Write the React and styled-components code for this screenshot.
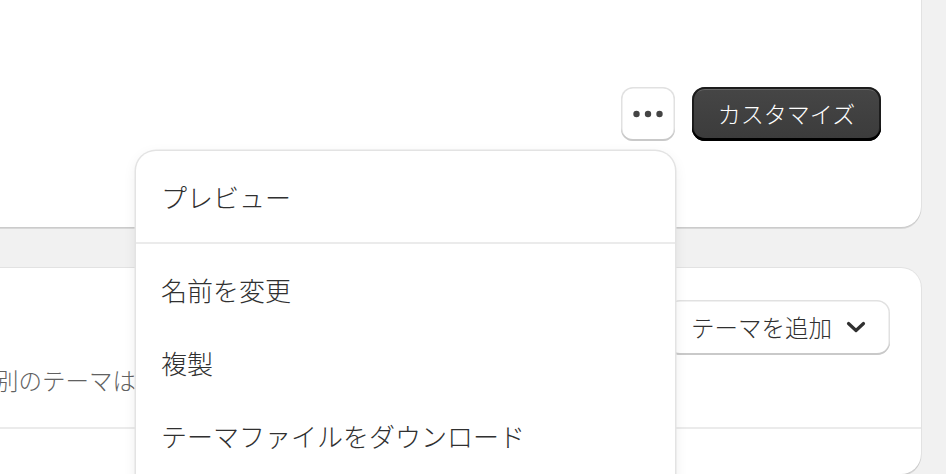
import React from "react";
import styled, { createGlobalStyle } from "styled-components";

const Global = createGlobalStyle`
  html, body { margin: 0; padding: 0; overflow: hidden; background: #f1f1f1; }
  body { font-family: "Noto Sans CJK JP", "Noto Sans", sans-serif; color: #303030; font-weight: 300; }
`;

const Page = styled.div`
  display: flex;
  flex-direction: column;
  gap: 41px;
  width: 961px;
  margin-left: -40px;
  height: 474px;
`;

const Card = styled.section`
  background: #fff;
  border-radius: 20px;
  box-shadow: 0 2px 0 rgba(0, 0, 0, 0.1), 0 0 0 1px rgba(0, 0, 0, 0.06);
  padding: ${(p) => p.$pad};
  margin-top: ${(p) => p.$mt || "0"};
  flex: ${(p) => (p.$grow ? "1" : "none")};
`;

const Actions = styled.div`
  display: flex;
  justify-content: flex-end;
  align-items: center;
  gap: 17px;
`;

const MenuAnchor = styled.div`
  position: relative;
  display: flex;
`;

const IconButton = styled.button`
  width: 54px;
  height: 54px;
  border: none;
  border-radius: 12px;
  background: #fff;
  box-shadow: inset 0 -2px 0 #c9c9c9, inset 0 0 0 1.5px #e1e1e1;
  display: flex;
  align-items: center;
  justify-content: center;
  padding: 0;
`;

const PrimaryButton = styled.button`
  height: 54px;
  width: 189px;
  padding: 0 0 2px;
  border: none;
  border-radius: 13px;
  background: linear-gradient(#464646, #3b3b3b);
  color: #fff;
  font-family: inherit;
  font-weight: 300;
  font-size: 23px;
  box-shadow: inset 0 -3px 0 #000, inset 0 0 0 2px #1c1c1c,
    inset 0 3px 0 rgba(255, 255, 255, 0.18);
`;

const SecondaryButton = styled.button`
  height: 55px;
  padding: 0 24px 2px 24px;
  border: none;
  border-radius: 13px;
  background: #fff;
  color: #303030;
  font-family: inherit;
  font-weight: 300;
  font-size: 23.5px;
  display: flex;
  align-items: center;
  gap: 14px;
  box-shadow: inset 0 -2px 0 #c9c9c9, inset 0 0 0 1.5px #e1e1e1;
`;

const HeaderRow = styled.div`
  display: flex;
  justify-content: flex-end;
  padding-right: 31px;
`;

const Description = styled.p`
  margin: 10px 0 0;
  padding-left: 35px;
  font-size: 23.5px;
  line-height: 30px;
  color: #616161;
  white-space: nowrap;
`;

const Divider = styled.div`
  height: 2px;
  background: #ebebeb;
  margin: ${(p) => p.$m || "0"};
`;

const Menu = styled.div`
  position: absolute;
  top: calc(100% + 10px);
  right: 0;
  width: 539px;
  z-index: 10;
  background: #fff;
  border-radius: 20px;
  box-shadow: 0 0 0 1.5px #e3e3e3, 0 4px 14px rgba(0, 0, 0, 0.08);
  padding-bottom: 40px;
`;

const MenuSection = styled.div`
  padding: 9px 0;
`;

const MenuItem = styled.div`
  height: 73px;
  display: flex;
  align-items: center;
  padding: 0 25px;
  font-size: 26px;
  color: #303030;
  white-space: nowrap;
`;

const Dots = () => (
  <svg width="30" height="8" viewBox="0 0 30 8">
    <circle cx="3.5" cy="4" r="3.2" fill="#444" />
    <circle cx="15" cy="4" r="3.2" fill="#444" />
    <circle cx="26.5" cy="4" r="3.2" fill="#444" />
  </svg>
);

const Chevron = () => (
  <svg width="20" height="12" viewBox="0 0 20 12">
    <path d="M2.5 2.5 L10 9.5 L17.5 2.5" fill="none" stroke="#303030" strokeWidth="3.2" strokeLinecap="round" strokeLinejoin="round" />
  </svg>
);

export default function App() {
  return (
    <>
      <Global />
      <Page>
        <Card $pad="107px 40px 86px" $mt="-20px">
          <Actions>
            <MenuAnchor>
              <IconButton aria-label="その他の操作">
                <Dots />
              </IconButton>
              <Menu>
                <MenuSection>
                  <MenuItem>プレビュー</MenuItem>
                </MenuSection>
                <Divider />
                <MenuSection>
                  <MenuItem>名前を変更</MenuItem>
                  <MenuItem>複製</MenuItem>
                  <MenuItem>テーマファイルをダウンロード</MenuItem>
                </MenuSection>
              </Menu>
            </MenuAnchor>
            <PrimaryButton>カスタマイズ</PrimaryButton>
          </Actions>
        </Card>
        <Card $pad="32px 0 0" $grow>
          <HeaderRow>
            <SecondaryButton>
              テーマを追加
              <Chevron />
            </SecondaryButton>
          </HeaderRow>
          <Description>別のテーマはここに追加されます</Description>
          <Divider $m="32px 0 0" />
        </Card>
      </Page>
    </>
  );
}
